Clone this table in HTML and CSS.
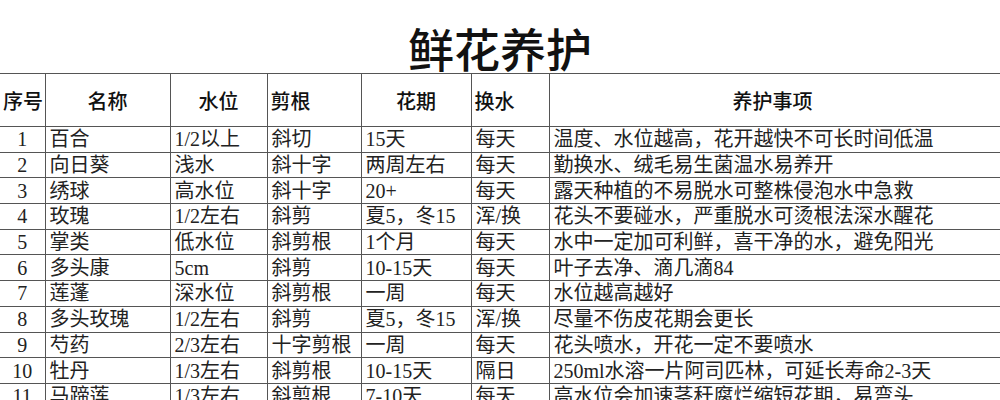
FILE: index.html
```html
<!DOCTYPE html>
<html lang="zh-CN">
<head>
<meta charset="utf-8">
<title>鲜花养护</title>
<link rel="stylesheet" href="styles.css">
</head>
<body>
<div class="sheet">
  <h1 class="title">鲜花养护</h1>
  <table class="care">
    <colgroup>
      <col class="c-no"><col class="c-name"><col class="c-water"><col class="c-cut"><col class="c-period"><col class="c-change"><col class="c-notes">
    </colgroup>
    <thead>
      <tr>
        <th class="left">序号</th>
        <th>名称</th>
        <th>水位</th>
        <th class="left">剪根</th>
        <th>花期</th>
        <th class="left">换水</th>
        <th class="notes-h">养护事项</th>
      </tr>
    </thead>
    <tbody>
      <tr><td class="no">1</td><td>百合</td><td>1/2以上</td><td>斜切</td><td>15天</td><td>每天</td><td>温度、水位越高，花开越快不可长时间低温</td></tr>
      <tr><td class="no">2</td><td>向日葵</td><td>浅水</td><td>斜十字</td><td>两周左右</td><td>每天</td><td>勤换水、绒毛易生菌温水易养开</td></tr>
      <tr><td class="no">3</td><td>绣球</td><td>高水位</td><td>斜十字</td><td>20+</td><td>每天</td><td>露天种植的不易脱水可整株侵泡水中急救</td></tr>
      <tr><td class="no">4</td><td>玫瑰</td><td>1/2左右</td><td>斜剪</td><td>夏5，冬15</td><td>浑/换</td><td>花头不要碰水，严重脱水可烫根法深水醒花</td></tr>
      <tr><td class="no">5</td><td>掌类</td><td>低水位</td><td>斜剪根</td><td>1个月</td><td>每天</td><td>水中一定加可利鲜，喜干净的水，避免阳光</td></tr>
      <tr><td class="no">6</td><td>多头康</td><td>5cm</td><td>斜剪</td><td>10-15天</td><td>每天</td><td>叶子去净、滴几滴84</td></tr>
      <tr><td class="no">7</td><td>莲蓬</td><td>深水位</td><td>斜剪根</td><td>一周</td><td>每天</td><td>水位越高越好</td></tr>
      <tr><td class="no">8</td><td>多头玫瑰</td><td>1/2左右</td><td>斜剪</td><td>夏5，冬15</td><td>浑/换</td><td>尽量不伤皮花期会更长</td></tr>
      <tr><td class="no">9</td><td>芍药</td><td>2/3左右</td><td>十字剪根</td><td>一周</td><td>每天</td><td>花头喷水，开花一定不要喷水</td></tr>
      <tr><td class="no">10</td><td>牡丹</td><td>1/3左右</td><td>斜剪根</td><td>10-15天</td><td>隔日</td><td>250ml水溶一片阿司匹林，可延长寿命2-3天</td></tr>
      <tr><td class="no">11</td><td>马蹄莲</td><td>1/3左右</td><td>斜剪根</td><td>7-10天</td><td>每天</td><td>高水位会加速茎秆腐烂缩短花期，易弯头</td></tr>
    </tbody>
  </table>
</div>
</body>
</html>
```

FILE: styles.css
```css
html, body {
  margin: 0;
  padding: 0;
  overflow: hidden;
  background: #ffffff;
}

.sheet {
  width: 1000px;
  height: 400px;
  overflow: hidden;
  font-family: "Liberation Serif", "Noto Sans CJK SC", serif;
  color: #1e1e1e;
}

.title {
  margin: 0;
  height: 73px;
  box-sizing: border-box;
  padding-top: 22px;
  line-height: 50px;
  font-size: 46px;
  font-weight: 500;
  text-align: center;
  font-family: "Noto Sans CJK SC", sans-serif;
  color: #111;
}

.care {
  border-collapse: collapse;
  table-layout: fixed;
  width: 1010px;
}

.c-no { width: 45px; }
.c-name { width: 125px; }
.c-water { width: 97px; }
.c-cut { width: 94px; }
.c-period { width: 110px; }
.c-change { width: 78px; }
.c-notes { width: 461px; }

.care th,
.care td {
  border: 1px solid #555;
  padding: 0 0 0 4px;
  white-space: nowrap;
  overflow: hidden;
  font-size: 20px;
}

.care tr > :first-child {
  border-left: none;
}

.care th {
  height: 52px;
  font-weight: 500;
  text-align: center;
  padding: 0;
  font-family: "Noto Sans CJK SC", sans-serif;
  color: #111;
}

.care th.left {
  text-align: left;
  padding-left: 3px;
}

.care th.notes-h {
  padding-right: 14px;
}

.care td {
  height: 24.7px;
  line-height: 24px;
  text-align: left;
  color: #222;
}

.care td.no {
  text-align: center;
  padding: 0;
}
```
